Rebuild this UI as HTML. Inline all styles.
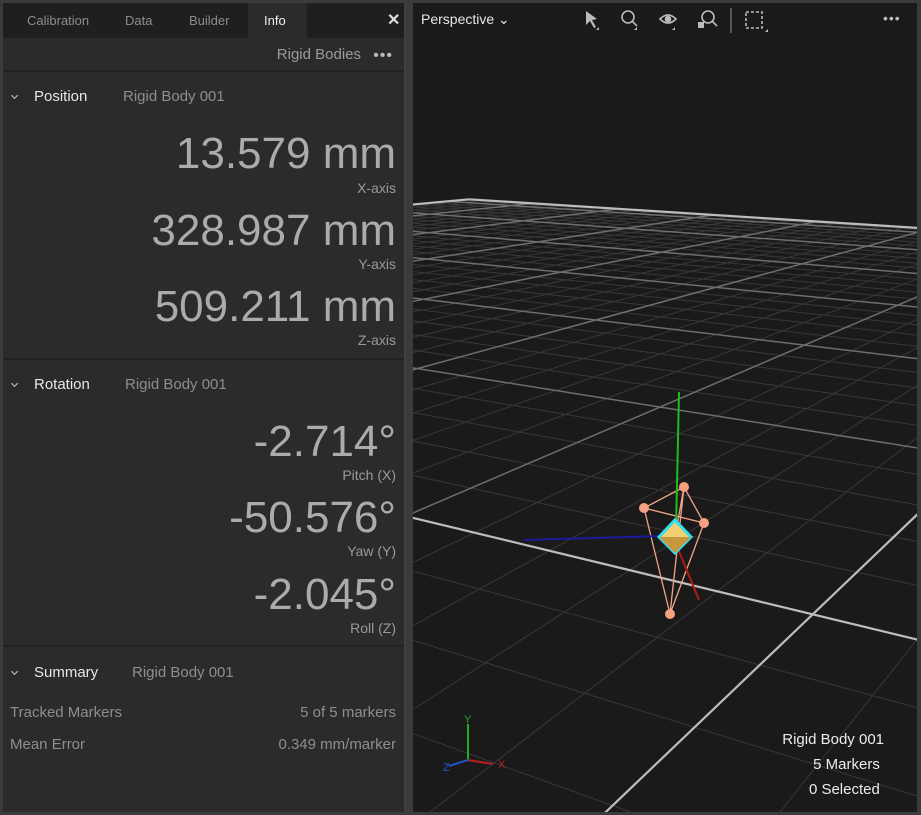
<!DOCTYPE html>
<html><head><meta charset="utf-8">
<style>
*{margin:0;padding:0;box-sizing:border-box}
html,body{width:921px;height:815px;overflow:hidden}
body{background:#3b3b3b;font-family:"Liberation Sans",sans-serif;position:relative}
.left{position:absolute;left:3px;top:3px;width:403px;height:809px;background:#2b2b2b;border-right:2px solid #3f3f3f;overflow:hidden}
.tabs{position:absolute;left:0;top:0;width:403px;height:35px;background:#1f1f1f}
.tab{position:absolute;top:10px;font-size:13px;color:#8c8c8c}
.act{position:absolute;left:245px;top:0;width:59px;height:35px;background:#2b2b2b}
.t{position:absolute;white-space:nowrap}
.hdr{font-size:15px;color:#e6e6e6}
.sub{font-size:15px;color:#8e8e8e}
.big{font-size:44px;color:#ababab;right:8px;text-align:right}
.lab{font-size:14px;color:#9a9a9a;right:8px;text-align:right}
.sep{position:absolute;left:0;width:403px;height:2px;background:#222}
.chev{position:absolute;width:7px;height:7px;border-right:1.5px solid #ccc;border-bottom:1.5px solid #ccc;transform:rotate(45deg)}
.vp{position:absolute;left:413px;top:3px;width:504px;height:809px;background:#1a1a1a;overflow:hidden}
</style></head><body>
<div class="left">
 <div class="tabs">
  <div class="act"></div>
  <div class="tab" style="left:24px">Calibration</div>
  <div class="tab" style="left:122px">Data</div>
  <div class="tab" style="left:186px">Builder</div>
  <div class="tab" style="left:261px;color:#eee">Info</div>
  <div class="tab" style="left:384px;top:7px;color:#ddd;font-size:16px;font-weight:bold">✕</div>
 </div>
 <div class="t sub" style="right:43px;top:43px;color:#9a9a9a">Rigid Bodies</div>
 <div class="t" style="right:11px;top:44px;color:#bbb;font-size:16px;letter-spacing:1px">•••</div>
 <div class="sep" style="top:67px"></div>
 <div class="chev" style="left:9px;top:90px;width:5px;height:5px"></div>
 <div class="t hdr" style="left:31px;top:85px">Position</div>
 <div class="t sub" style="left:120px;top:85px">Rigid Body 001</div>
 <div class="t big" style="top:126px">13.579 mm</div>
 <div class="t lab" style="top:177px">X-axis</div>
 <div class="t big" style="top:203px">328.987 mm</div>
 <div class="t lab" style="top:253px">Y-axis</div>
 <div class="t big" style="top:279px">509.211 mm</div>
 <div class="t lab" style="top:329px">Z-axis</div>
 <div class="sep" style="top:355px"></div>
 <div class="chev" style="left:9px;top:378px;width:5px;height:5px"></div>
 <div class="t hdr" style="left:31px;top:373px">Rotation</div>
 <div class="t sub" style="left:122px;top:373px">Rigid Body 001</div>
 <div class="t big" style="top:414px">-2.714°</div>
 <div class="t lab" style="top:464px">Pitch (X)</div>
 <div class="t big" style="top:490px">-50.576°</div>
 <div class="t lab" style="top:540px">Yaw (Y)</div>
 <div class="t big" style="top:567px">-2.045°</div>
 <div class="t lab" style="top:617px">Roll (Z)</div>
 <div class="sep" style="top:642px"></div>
 <div class="chev" style="left:9px;top:666px;width:5px;height:5px"></div>
 <div class="t hdr" style="left:31px;top:661px">Summary</div>
 <div class="t sub" style="left:129px;top:661px">Rigid Body 001</div>
 <div class="t sub" style="left:7px;top:701px">Tracked Markers</div>
 <div class="t sub" style="right:8px;top:701px">5 of 5 markers</div>
 <div class="t sub" style="left:7px;top:733px">Mean Error</div>
 <div class="t sub" style="right:8px;top:733px">0.349 mm/marker</div>
</div>
<div class="vp">
<svg id="g" width="504" height="809" viewBox="413 3 504 809" style="position:absolute;left:0;top:0">
 <g id="grid"></g>
 <g stroke="#f2a488" stroke-width="1.3" fill="none">
  <path d="M684 487L644 508L704 523L684 487L670 614L644 508M704 523L670 614M684 487L675 537M644 508L704 523"/>
 </g>
 <line x1="524" y1="540" x2="660" y2="536" stroke="#1a1aa0" stroke-width="2"/>
 <line x1="679" y1="392" x2="676" y2="530" stroke="#22bb22" stroke-width="2"/>
 <line x1="676" y1="544" x2="699" y2="600" stroke="#b01818" stroke-width="2"/>
 <path d="M675 520L691 537L675 553L659 537Z" fill="#f0d070" stroke="#30e0f0" stroke-width="3"/>
 <path d="M659 537L691 537L675 553Z" fill="#c89840"/>
 <g fill="#f5a080"><circle cx="684" cy="487" r="5"/><circle cx="644" cy="508" r="5"/><circle cx="704" cy="523" r="5"/><circle cx="670" cy="614" r="5"/></g>
 <line x1="468" y1="760" x2="468" y2="724" stroke="#22aa22" stroke-width="2"/>
 <line x1="468" y1="760" x2="493" y2="764" stroke="#b82020" stroke-width="2"/>
 <line x1="468" y1="760" x2="449" y2="766" stroke="#2255cc" stroke-width="2"/>
 <text x="464" y="723" fill="#22aa22" font-size="11" font-family="Liberation Sans">Y</text>
 <text x="498" y="768" fill="#c02020" font-size="11" font-family="Liberation Sans">X</text>
 <text x="443" y="771" fill="#2255cc" font-size="11" font-family="Liberation Sans">Z</text>
</svg>
 <div class="t" style="left:8px;top:8px;color:#e6e6e6;font-size:14px">Perspective ⌄</div>
 <svg width="504" height="36" style="position:absolute;left:0;top:0" fill="none" stroke="#bbb" stroke-width="1.6">
  <path d="M173 8L173 22L177 18L181 25L183 24L179 17L184 16Z" fill="#bbb" stroke="none"/>
  <path d="M183 27L186 27L186 24Z" fill="#bbb" stroke="none"/>
  <circle cx="215" cy="14" r="6"/><path d="M219 18L224 23"/><path d="M221 27L224 27L224 24Z" fill="#bbb" stroke="none"/>
  <path d="M247 16Q255 8 263 16Q255 24 247 16Z"/><circle cx="255" cy="16" r="2.5" fill="#bbb"/><path d="M259 27L262 27L262 24Z" fill="#bbb" stroke="none"/>
  <circle cx="295" cy="14" r="6"/><path d="M299 18L304 23"/><rect x="285" y="19" width="6" height="6" fill="#bbb" stroke="none"/>
  <path d="M318 5V30" stroke="#666"/>
  <rect x="333" y="9" width="16" height="16" stroke-dasharray="3 2"/><path d="M352 29L355 29L355 26Z" fill="#bbb" stroke="none"/>
 </svg>
 <div class="t" style="left:470px;top:7px;color:#bbb;font-size:14px;letter-spacing:1px">•••</div>
 <div class="t" style="right:33px;top:724px;color:#ececec;font-size:15px;text-align:right;line-height:25px">Rigid Body 001<br>5 Markers&nbsp;<br>0 Selected&nbsp;</div>
</div>
<script>
(function(){
var VA=[-1400,80],VB=[1330,120],O=[812.7,614.3],a=0.2254,b=0.465;
function P(u,v){var d=a*u+b*v+1;return [(a*u*VA[0]+b*v*VB[0]+O[0])/d,(a*u*VA[1]+b*v*VB[1]+O[1])/d];}
var U0=-10,U1=6.8,V0=-10,V1=6.3,s="",eps=0.04;
function seg(p,q,c,w){s+='<line x1="'+p[0].toFixed(1)+'" y1="'+p[1].toFixed(1)+'" x2="'+q[0].toFixed(1)+'" y2="'+q[1].toFixed(1)+'" stroke="'+c+'" stroke-width="'+w+'"/>';}
var layers=[[],[],[]];
function add(k,str){layers[k].push(str);}
for(var i=Math.round(V0*5);i<=Math.round(V1*5);i++){
 var v=i/5; if(i==Math.round(V1*5))v=V1;
 var umin=Math.max(U0,(eps-b*v-1)/a); if(umin>=U1)continue;
 var maj=(i%5==0)||v==V1, c=(v==0||v==V1)?"#bdbdbd":(maj?"#6e6e6e":"#383838"),w=(v==0||v==V1)?2.2:(maj?1.5:1);
 s="";seg(P(umin,v),P(U1,v),c,w);add(v==0||v==V1?2:(maj?1:0),s);
}
for(var j=Math.round(U0*5);j<=Math.round(U1*5);j++){
 var u=j/5; if(j==Math.round(U1*5))u=U1;
 var vmin=Math.max(V0,(eps-a*u-1)/b); if(vmin>=V1)continue;
 var maj=(j%5==0)||u==U1, c=(u==0||u==U1)?"#bdbdbd":(maj?"#6e6e6e":"#383838"),w=(u==0||u==U1)?2.2:(maj?1.5:1);
 s="";seg(P(u,vmin),P(u,V1),c,w);add(u==0||u==U1?2:(maj?1:0),s);
}
document.getElementById("grid").innerHTML=layers[0].join("")+layers[1].join("")+layers[2].join("");
})();
</script>
</body></html>
